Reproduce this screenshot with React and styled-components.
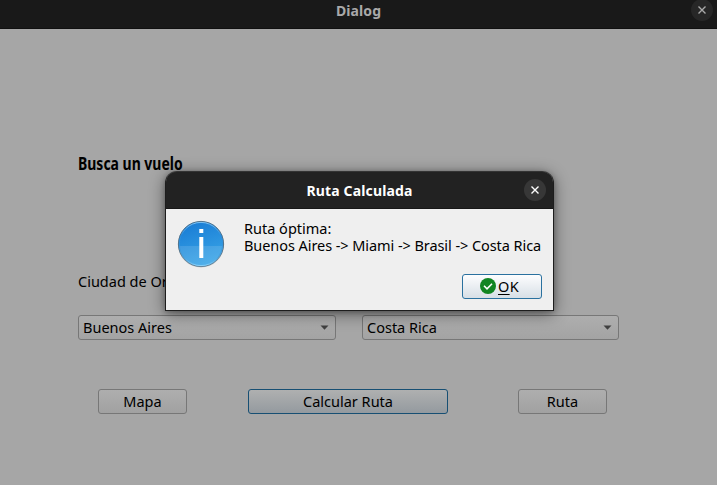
import React from "react";
import styled, { createGlobalStyle } from "styled-components";

const Global = createGlobalStyle`
  * { box-sizing: border-box; }
  body {
    margin: 0;
    overflow: hidden;
    font: 14.5px/17px "Noto Sans", "Open Sans", sans-serif;
    color: #000;
  }
  button { font: inherit; color: inherit; padding: 0; }
`;

const Window = styled.main`
  position: relative;
  width: 717px;
  height: 485px;
  background: #a6a6a6;
`;

const WindowBar = styled.header`
  display: grid;
  grid-template-columns: 1fr auto 1fr;
  height: 29px;
  background: #191919;
  border-bottom: 1px solid #101010;
  color: #a9a9a9;
`;

const Title = styled.h1`
  grid-column: 2;
  margin: 0;
  padding-top: 1px;
  font-size: 14px;
  font-weight: 700;
  line-height: 20px;
  letter-spacing: ${(p) => p.$track || 0}px;
  white-space: nowrap;
`;

const CloseButton = styled.button`
  grid-column: 3;
  justify-self: end;
  display: grid;
  place-items: center;
  width: 22px;
  height: 22px;
  border: 0;
  border-radius: 50%;
  background: ${(p) => (p.$dim ? "#272727" : "#373737")};
  color: ${(p) => (p.$dim ? "#aaa" : "#fff")};
  margin: ${(p) => (p.$dim ? "-1px 4px 0 0" : "7px 7px 0 0")};
`;

const Content = styled.section`
  padding: 124px 98px 0 78px;
`;

const Heading = styled.h2`
  width: max-content;
  margin: 0;
  font-size: 18.5px;
  font-weight: 700;
  line-height: 20px;
  transform: scaleX(${(p) => p.$stretch});
  transform-origin: left;
`;

const Label = styled.span`
  letter-spacing: ${(p) => p.$track || 0}px;
  white-space: nowrap;
`;

const Labels = styled.div`
  display: grid;
  grid-template-columns: 258px 257px;
  column-gap: 26px;
  margin-top: 100px;
`;

const Selects = styled(Labels)`
  margin-top: 25px;
`;

const Select = styled.button`
  display: flex;
  align-items: center;
  justify-content: space-between;
  height: 25px;
  padding: 0 6px 0 4px;
  border: 1px solid #777;
  border-radius: 3px;
  background: linear-gradient(#aeaeae, #a3a3a3);
`;

const Actions = styled.div`
  display: grid;
  grid-template-columns: 150px 270px 89px;
  margin-top: 49px;
  padding-left: 20px;
`;

const Action = styled.button`
  width: ${(p) => (p.$primary ? 200 : 89)}px;
  height: 25px;
  border: 1px solid ${(p) => (p.$primary ? "#174f73" : "#777")};
  border-radius: 3px;
  background: ${(p) =>
    p.$primary ? "linear-gradient(#afb0b0, #949a9f)" : "linear-gradient(#aeaeae, #a1a1a1)"};
`;

const MessageDialog = styled.section`
  position: absolute;
  left: 165px;
  top: 171px;
  width: 389px;
  height: 140px;
  border: 1px solid #1d1d1d;
  border-top: 0;
  border-radius: 12px 12px 0 0;
  background: #efefef;
  box-shadow: 0 3px 16px rgba(0, 0, 0, 0.48), 0 1px 5px rgba(0, 0, 0, 0.25);
`;

const MessageBar = styled.header`
  display: grid;
  grid-template-columns: 1fr auto 1fr;
  height: 38px;
  background: #222;
  border-top: 1px solid #343434;
  border-bottom: 1px solid #171717;
  border-radius: 11px 11px 0 0;
  color: #fff;

  ${Title} { margin-top: 8px; }
`;

const Message = styled.div`
  display: flex;
  gap: 19px;
  padding: 11px 11px 0;

  svg { flex: none; }
`;

const MessageText = styled.div`
  display: flex;
  flex-direction: column;
  gap: 1px;
  line-height: 16px;
`;

const Footer = styled.footer`
  display: flex;
  justify-content: flex-end;
  padding: 6px 11px 0 0;
`;

const OkButton = styled.button`
  display: flex;
  align-items: center;
  gap: 2px;
  width: 80px;
  height: 25px;
  padding-left: 17px;
  border: 1px solid #2a719f;
  border-radius: 3px;
  background: linear-gradient(#fdfdfe, #d7dfe6);

  svg { margin-top: -1px; }
`;

const Mnemonic = styled.span`
  text-decoration: underline 1px;
  text-underline-offset: 2px;
`;

const CloseIcon = () => (
  <svg width="10" height="10" viewBox="0 0 10 10" aria-hidden="true">
    <path d="M1.5 1.5l7 7M8.5 1.5l-7 7" stroke="currentColor" strokeWidth="1.4" />
  </svg>
);

const Arrow = () => (
  <svg width="9" height="5" viewBox="0 0 9 5" aria-hidden="true">
    <path d="M.5.5h8L4.5 4.8z" fill="#404040" />
  </svg>
);

const InfoIcon = () => (
  <svg width="48" height="48" viewBox="0 0 48 48" aria-hidden="true">
    <defs>
      <linearGradient id="info-fill" x1="0" y1="0" x2=".35" y2="1">
        <stop offset="0" stopColor="#1678d3" />
        <stop offset="1" stopColor="#37a3e6" />
      </linearGradient>
      <linearGradient id="info-rim" x1="0" y1="0" x2="0" y2="1">
        <stop offset="0" stopColor="#8ccaf4" />
        <stop offset=".3" stopColor="#298bdc" />
        <stop offset=".8" stopColor="#459fdc" />
        <stop offset="1" stopColor="#91d5fa" />
      </linearGradient>
    </defs>
    <circle cx="24" cy="24.4" r="23.1" fill="#000" opacity=".18" />
    <circle cx="24" cy="24" r="22.6" fill="url(#info-fill)" stroke="#4b6b82" strokeWidth=".9" />
    <path d="M2 26h44a22 22 0 0 1-44 0z" fill="#fff" opacity=".12" />
    <circle cx="24" cy="24" r="21.6" fill="none" stroke="url(#info-rim)" strokeWidth=".9" />
    <path d="M22.3 9h4v4h-4zM22.3 17h4v21h-4z" fill="#fff" />
  </svg>
);

const CheckIcon = () => (
  <svg width="16" height="16" viewBox="0 0 16 16" aria-hidden="true">
    <circle cx="8" cy="8" r="8" fill="#118522" />
    <path d="M4 7.8l3 3 5-5" fill="none" stroke="#fff" strokeWidth="1.6" />
  </svg>
);

export default function App() {
  return (
    <Window>
      <Global />
      <WindowBar>
        <Title $track={0.1}>Dialog</Title>
        <CloseButton $dim aria-label="Cerrar"><CloseIcon /></CloseButton>
      </WindowBar>
      <Content>
        <Heading $stretch={0.755}>Busca un vuelo</Heading>
        <Labels><Label>Ciudad de Origen</Label></Labels>
        <Selects>
          <Select><Label>Buenos Aires</Label><Arrow /></Select>
          <Select><Label>Costa Rica</Label><Arrow /></Select>
        </Selects>
        <Actions>
          <Action><Label>Mapa</Label></Action>
          <Action $primary><Label>Calcular Ruta</Label></Action>
          <Action><Label>Ruta</Label></Action>
        </Actions>
      </Content>
      <MessageDialog role="dialog" aria-label="Ruta Calculada">
        <MessageBar>
          <Title $track={0.15}>Ruta Calculada</Title>
          <CloseButton aria-label="Cerrar"><CloseIcon /></CloseButton>
        </MessageBar>
        <Message>
          <InfoIcon />
          <MessageText>
            <Label>Ruta óptima:</Label>
            <Label $track={-0.07}>Buenos Aires -&gt; Miami -&gt; Brasil -&gt; Costa Rica</Label>
          </MessageText>
        </Message>
        <Footer>
          <OkButton>
            <CheckIcon />
            <Label $track={0.3}><Mnemonic>O</Mnemonic>K</Label>
          </OkButton>
        </Footer>
      </MessageDialog>
    </Window>
  );
}
